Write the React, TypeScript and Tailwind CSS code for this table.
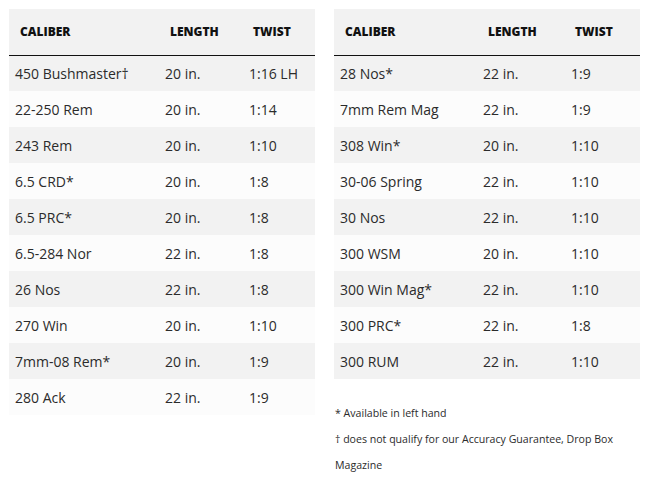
import React from 'react';

type Row = [string, string, string];

const leftRows: Row[] = [
  ['450 Bushmaster†', '20 in.', '1:16 LH'],
  ['22-250 Rem', '20 in.', '1:14'],
  ['243 Rem', '20 in.', '1:10'],
  ['6.5 CRD*', '20 in.', '1:8'],
  ['6.5 PRC*', '20 in.', '1:8'],
  ['6.5-284 Nor', '22 in.', '1:8'],
  ['26 Nos', '22 in.', '1:8'],
  ['270 Win', '20 in.', '1:10'],
  ['7mm-08 Rem*', '20 in.', '1:9'],
  ['280 Ack', '22 in.', '1:9'],
];

const rightRows: Row[] = [
  ['28 Nos*', '22 in.', '1:9'],
  ['7mm Rem Mag', '22 in.', '1:9'],
  ['308 Win*', '20 in.', '1:10'],
  ['30-06 Spring', '22 in.', '1:10'],
  ['30 Nos', '22 in.', '1:10'],
  ['300 WSM', '20 in.', '1:10'],
  ['300 Win Mag*', '22 in.', '1:10'],
  ['300 PRC*', '22 in.', '1:8'],
  ['300 RUM', '22 in.', '1:10'],
];

const BarrelTable: React.FC<{ rows: Row[]; widths: [string, string, string] }> = ({ rows, widths }) => (
  <table className="w-[306px] table-fixed border-collapse">
    <colgroup>
      <col className={widths[0]} />
      <col className={widths[1]} />
      <col className={widths[2]} />
    </colgroup>
    <thead>
      <tr className="bg-[#f2f2f2] border-b border-[#111]">
        <th className="h-[46px] pl-[11px] text-left text-[12px] font-extrabold text-[#111]">CALIBER</th>
        <th className="h-[46px] pl-[11px] text-left text-[12px] font-extrabold text-[#111]">LENGTH</th>
        <th className="h-[46px] pl-[10px] text-left text-[12px] font-extrabold text-[#111]">TWIST</th>
      </tr>
    </thead>
    <tbody>
      {rows.map((r, i) => (
        <tr key={r[0]} className={i % 2 === 0 ? 'bg-[#f2f2f2]' : 'bg-[#fcfcfc]'}>
          <td className="h-[36px] pl-[6px] text-[14px] text-[#2b2b2b]">{r[0]}</td>
          <td className="h-[36px] pl-[6px] text-[14px] text-[#2b2b2b]">{r[1]}</td>
          <td className="h-[36px] pl-[6px] text-[14px] text-[#2b2b2b]">{r[2]}</td>
        </tr>
      ))}
    </tbody>
  </table>
);

export default function App() {
  return (
    <div
      className="w-[649px] h-[480px] bg-white pt-[9px] pl-[9px] flex gap-[19px] items-start"
      style={{ fontFamily: '"Open Sans", "Liberation Sans", sans-serif' }}
    >
      <BarrelTable rows={leftRows} widths={['w-[150px]', 'w-[84px]', 'w-[72px]']} />
      <div className="flex flex-col">
        <BarrelTable rows={rightRows} widths={['w-[143px]', 'w-[88px]', 'w-[75px]']} />
        <div className="mt-[21px] pl-px text-[10.6px] leading-[26px] text-[#2b2b2b] w-[300px]">
          <p>* Available in left hand</p>
          <p>† does not qualify for our Accuracy Guarantee, Drop Box Magazine</p>
        </div>
      </div>
    </div>
  );
}
